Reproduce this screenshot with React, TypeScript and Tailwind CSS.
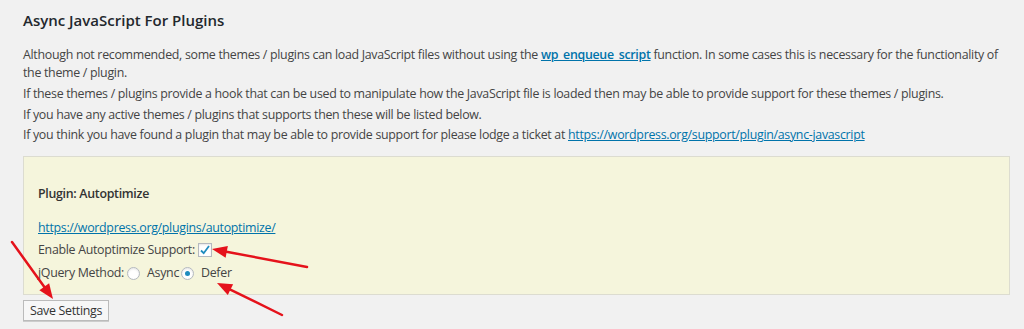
import React from 'react';

type Pt = [number, number];

// red annotation arrows drawn over the screenshot
const arrows: { from: Pt; to: Pt }[] = [
  { from: [12, 242], to: [53, 299] },
  { from: [307, 267], to: [212, 249] },
  { from: [282, 315], to: [217, 283] },
];

const headPoints = (from: Pt, to: Pt, len = 15, half = 6) => {
  const dx = to[0] - from[0];
  const dy = to[1] - from[1];
  const d = Math.hypot(dx, dy);
  const ux = dx / d;
  const uy = dy / d;
  const bx = to[0] - ux * len;
  const by = to[1] - uy * len;
  return `${to[0]},${to[1]} ${bx - uy * half},${by + ux * half} ${bx + uy * half},${by - ux * half}`;
};

const Arrows = () => (
  <svg className="absolute inset-0 pointer-events-none" width={1024} height={329}>
    {arrows.map((a, i) => {
      const dx = a.to[0] - a.from[0];
      const dy = a.to[1] - a.from[1];
      const d = Math.hypot(dx, dy);
      const ex = a.to[0] - (dx / d) * 12;
      const ey = a.to[1] - (dy / d) * 12;
      return (
        <g key={i}>
          <line x1={a.from[0]} y1={a.from[1]} x2={ex} y2={ey} stroke="#e5121b" strokeWidth={2.5} strokeLinecap="round" />
          <polygon points={headPoints(a.from, a.to)} fill="#e5121b" />
        </g>
      );
    })}
  </svg>
);

const Checkbox = () => (
  <span className="inline-flex items-center justify-center w-[14px] h-[14px] bg-white border border-[#b4b9be] shadow-[inset_0_1px_2px_rgba(0,0,0,0.1)]">
    <svg width="12" height="12" viewBox="0 0 12 12">
      <path d="M2 6.5 L4.7 9.2 L10 2" fill="none" stroke="#1e8cbe" strokeWidth="1.8" />
    </svg>
  </span>
);

const Radio = ({ checked }: { checked?: boolean }) => (
  <span className="inline-flex items-center justify-center w-[13px] h-[13px] rounded-full bg-white border border-[#b4b9be] shadow-[inset_0_1px_2px_rgba(0,0,0,0.1)]">
    {checked && <span className="w-[5px] h-[5px] rounded-full bg-[#1e8cbe]" />}
  </span>
);

export default function App() {
  return (
    <div className="relative min-h-[329px] bg-[#f1f1f1] pl-[23px] pr-[14px] pt-[9px] font-['Open_Sans',sans-serif] text-[12.4px] text-[#444]">
      <h2 className="text-[15px] leading-[22px] font-semibold text-[#23282d]">Async JavaScript For Plugins</h2>

      <div className="mt-[15px] leading-[18px] tracking-[-0.3px]">
        <p className="whitespace-nowrap">
          Although not recommended, some themes / plugins can load JavaScript files without using the{' '}
          <a className="font-semibold text-[#0073aa] underline">wp_enqueue_script</a> function. In some cases this is necessary for the functionality of
          <br />
          the theme / plugin.
        </p>
        <p className="mt-[3px]">
          If these themes / plugins provide a hook that can be used to manipulate how the JavaScript file is loaded then may be able to provide support for these themes / plugins.
        </p>
        <p className="mt-[3px]">If you have any active themes / plugins that supports then these will be listed below.</p>
        <p className="mt-[2px]">
          If you think you have found a plugin that may be able to provide support for please lodge a ticket at{' '}
          <a className="text-[#0073aa] underline">https://wordpress.org/support/plugin/async-javascript</a>
        </p>
      </div>

      <div className="mt-[12px] border border-[#dcdcd0] bg-[#f5f5dc] pl-[14px] pt-[28px] pb-[12px] leading-[18px] tracking-[-0.3px]">
        <p className="font-semibold text-[#333]">Plugin: Autoptimize</p>
        <p className="mt-[16px]">
          <a className="text-[#0073aa] underline">https://wordpress.org/plugins/autoptimize/</a>
        </p>
        <div className="mt-[4px] flex items-center gap-[3px]">
          <span>Enable Autoptimize Support:</span>
          <Checkbox />
        </div>
        <div className="mt-[5px] flex items-center">
          <span>jQuery Method:</span>
          <span className="ml-[3px] flex"><Radio /></span>
          <span className="ml-[7px]">Async</span>
          <span className="ml-[2px] flex"><Radio checked /></span>
          <span className="ml-[7px]">Defer</span>
        </div>
      </div>

      <button className="mt-[5px] h-[21px] w-[86px] border border-[#bbb] bg-[#f7f7f7] text-[12.4px] leading-[18px] text-[#333] shadow-[0_1px_0_#ccc] tracking-[-0.3px]">
        Save Settings
      </button>

      <Arrows />
    </div>
  );
}
